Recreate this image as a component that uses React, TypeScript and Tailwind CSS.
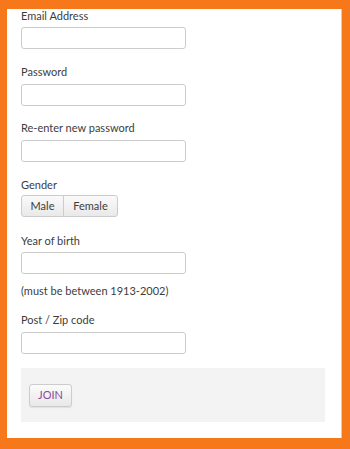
import React from "react";

const inputCls =
  "block w-[165px] h-[22px] rounded-[3px] border border-[#cccccc] bg-white";

function Label({ children, className = "" }: { children: React.ReactNode; className?: string }) {
  return (
    <div className={`text-[11px] leading-[12px] text-[#3d3d3d] ${className}`}>{children}</div>
  );
}

export default function App() {
  return (
    <div
      className="w-[350px] h-[449px] bg-[#f7781b] pt-[9px] pl-[7px] pr-[8px] pb-[11px]"
      style={{ fontFamily: "Lato, 'Open Sans', sans-serif" }}
    >
      <div className="h-full bg-white border-r border-[#cfcfcf] pl-[14px] pr-[16px] pt-px">
        <Label>Email Address</Label>
        <input className={`${inputCls} mt-[5px]`} />
        <Label className="mt-[17px]">Password</Label>
        <input className={`${inputCls} mt-[6px]`} />
        <Label className="mt-[16px]">Re-enter new password</Label>
        <input className={`${inputCls} mt-[6px]`} />
        <Label className="mt-[17px]">Gender</Label>
        <div className="mt-[4px] flex">
          <button className="h-[22px] w-[43px] rounded-l-[3px] border border-[#cccccc] bg-gradient-to-b from-[#fafafa] to-[#e9e9e9] text-[11px] text-[#3d3d3d]">
            Male
          </button>
          <button className="h-[22px] w-[55px] -ml-px rounded-r-[3px] border border-[#cccccc] bg-gradient-to-b from-[#fafafa] to-[#e9e9e9] text-[11px] text-[#3d3d3d]">
            Female
          </button>
        </div>
        <Label className="mt-[18px]">Year of birth</Label>
        <input className={`${inputCls} mt-[5px]`} />
        <Label className="mt-[11px]">(must be between 1913-2002)</Label>
        <Label className="mt-[17px]">Post / Zip code</Label>
        <input className={`${inputCls} mt-[6px]`} />
        <div className="mt-[14px] h-[54px] bg-[#f3f3f3] pl-[8px] pt-[16px]">
          <button className="block h-[23px] w-[43px] rounded-[3px] border border-[#cccccc] bg-gradient-to-b from-[#fbfbfb] to-[#e8e8e8] text-[11px] text-[#8b4a9c] shadow-[0_1px_1px_rgba(0,0,0,0.08)]">
            JOIN
          </button>
        </div>
      </div>
    </div>
  );
}
